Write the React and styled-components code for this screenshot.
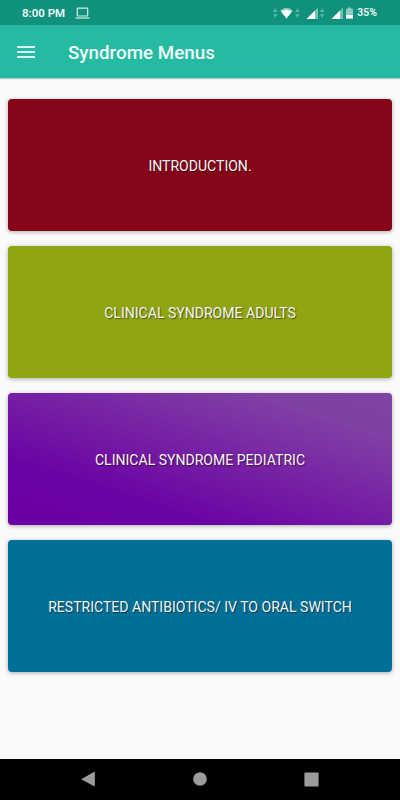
import styled, { createGlobalStyle } from "styled-components";

const GlobalStyle = createGlobalStyle`
  * {
    box-sizing: border-box;
  }
  body {
    margin: 0;
    background-color: #fafafa;
    font-family: Roboto, sans-serif;
  }
`;

const Screen = styled.div`
  width: 100%;
  height: 100vh;
  min-height: 800px;
  display: flex;
  flex-direction: column;
`;

const StatusBar = styled.div`
  height: 25px;
  flex: none;
  display: flex;
  align-items: center;
  padding: 1px 23px 0 22px;
  background-color: #0f917b;
  color: #effbf8;
`;

const StatusText = styled.span`
  font-size: ${({ size }) => size};
  font-weight: 600;
  line-height: 14px;
  white-space: nowrap;
`;

const StatusIcons = styled.div`
  display: flex;
  align-items: center;
  margin-left: auto;
  svg{
    display: block;
  }
`;

const Laptop = styled.svg`
  margin-left: 10px;
`;

const Toolbar = styled.header`
  height: 53px;
  flex: none;
  display: flex;
  align-items: center;
  padding: 1px 17px 0;
  background-color: #26baa3;
  box-shadow: 0 1px 1px rgba(38, 120, 105, 0.35);
`;

const MenuButton = styled.button`
  width: 18px;
  height: 12px;
  padding: 0;
  border: none;
  background: none;
  display: flex;
  flex-direction: column;
  justify-content: space-between;
  cursor: pointer;
`;

const MenuLine = styled.span`
  width: 18px;
  height: 2px;
  background-color: #dcf7f1;
`;

const Title = styled.h1`
  margin: 1px 0 0 33px;
  font-size: 18.8px;
  font-weight: 500;
  line-height: 24px;
  color: #effbf8;
`;

const Menus = styled.main`
  flex: 1;
  display: flex;
  flex-direction: column;
  gap: 15px;
  padding: 21px 8px 0;
`;

const Card = styled.button`
  width: 100%;
  height: 132px;
  display: flex;
  justify-content: center;
  align-items: center;
  padding: 1px 0 0;
  border: none;
  border-radius: 4px;
  background: ${({ fill }) => fill};
  box-shadow: 0 1px 4px rgba(0, 0, 0, 0.32);
  color: #f5f5f5;
  font-family: inherit;
  font-size: 14.06px;
  text-shadow: 1px 1px 1px rgba(0, 0, 0, 0.5);
  cursor: pointer;
`;

const NavBar = styled.nav`
  height: 41px;
  flex: none;
  display: flex;
  justify-content: space-between;
  align-items: center;
  padding: 0 81px 1px 80px;
  background-color: #000;
  svg{
    display: block;
    fill: #9c9c9c;
  }
`;

const menus = [
  { text: "INTRODUCTION.", fill: "#85061b" },
  { text: "CLINICAL SYNDROME ADULTS", fill: "#91a512" },
  {
    text: "CLINICAL SYNDROME PEDIATRIC",
    fill: "linear-gradient(18deg, #6a00a4 0%, #6b02a4 25%, #7620a4 53%, #8040a4 82%, #8242a4 100%)",
  },
  { text: "RESTRICTED ANTIBIOTICS/ IV TO ORAL SWITCH", fill: "#007098" },
];

// small up/down data arrows
const Arrows = ({ x }) => (
  <path d={`M${x} 6L${x + 2.2} 2L${x + 4.4} 6ZM${x} 8L${x + 2.2} 12L${x + 4.4} 8Z`} fill="#5bb5a5" />
);

const Signal = ({ x }) => (
  <>
    <path d={`M${x} 13L${x + 11.5} 1.5V13Z`} fill="#75c1b4" />
    <path d={`M${x} 13L${x + 8.5} 4.5V13Z`} fill="#fff" />
  </>
);

const App = () => {
  return <>
  <GlobalStyle />
  <Screen>
    <StatusBar>
      <StatusText size="11.5px">8:00 PM</StatusText>
      <Laptop width="15" height="12" viewBox="0 0 15 12" fill="none" stroke="#d5f0ea" strokeWidth="1.2">
        <rect x="2.3" y="1.2" width="10.4" height="7.8" rx="0.7" />
        <path d="M0.5 11H14.5" />
      </Laptop>
      <StatusIcons>
        <svg width="84" height="14" viewBox="0 0 84 14">
          <Arrows x={0} />
          <path d="M7.2 4.5Q13.5 -0.8 19.8 4.5L13.5 12.5Z" fill="#8bcbc0" />
          <path d="M8.2 5.5Q13.5 2 18.8 5.5L13.5 12.5Z" fill="#fff" />
          <Arrows x={22.2} />
          <Signal x={33.5} />
          <Arrows x={47} />
          <Signal x={58.5} />
          <path d="M75 1.5H78V2.7H80V12.5H73V2.7H75Z" fill="#8bcbc0" />
          <path d="M73 9H80V12.5H73Z" fill="#fff" />
        </svg>
      </StatusIcons>
      <StatusText size="10.5px">35%</StatusText>
    </StatusBar>
    <Toolbar>
      <MenuButton aria-label="Menu">
        <MenuLine />
        <MenuLine />
        <MenuLine />
      </MenuButton>
      <Title>Syndrome Menus</Title>
    </Toolbar>
    <Menus>
      {menus.map(({ text, fill }) => (
        <Card key={text} fill={fill}>{text}</Card>
      ))}
    </Menus>
    <NavBar>
      <svg width="15" height="16" viewBox="0 0 15 16">
        <path d="M1.2 8.2L14.2 0.8Q14.8 0.6 14.8 1.3V14.7Q14.8 15.4 14.2 15.2L1.2 8.2Z" />
      </svg>
      <svg width="14" height="14" viewBox="0 0 14 14">
        <circle cx="7" cy="7" r="6.8" />
      </svg>
      <svg width="15" height="15" viewBox="0 0 15 15">
        <rect x="0.4" y="0.4" width="14.2" height="14.2" rx="1" />
      </svg>
    </NavBar>
  </Screen>
  </>
}

export default App;
